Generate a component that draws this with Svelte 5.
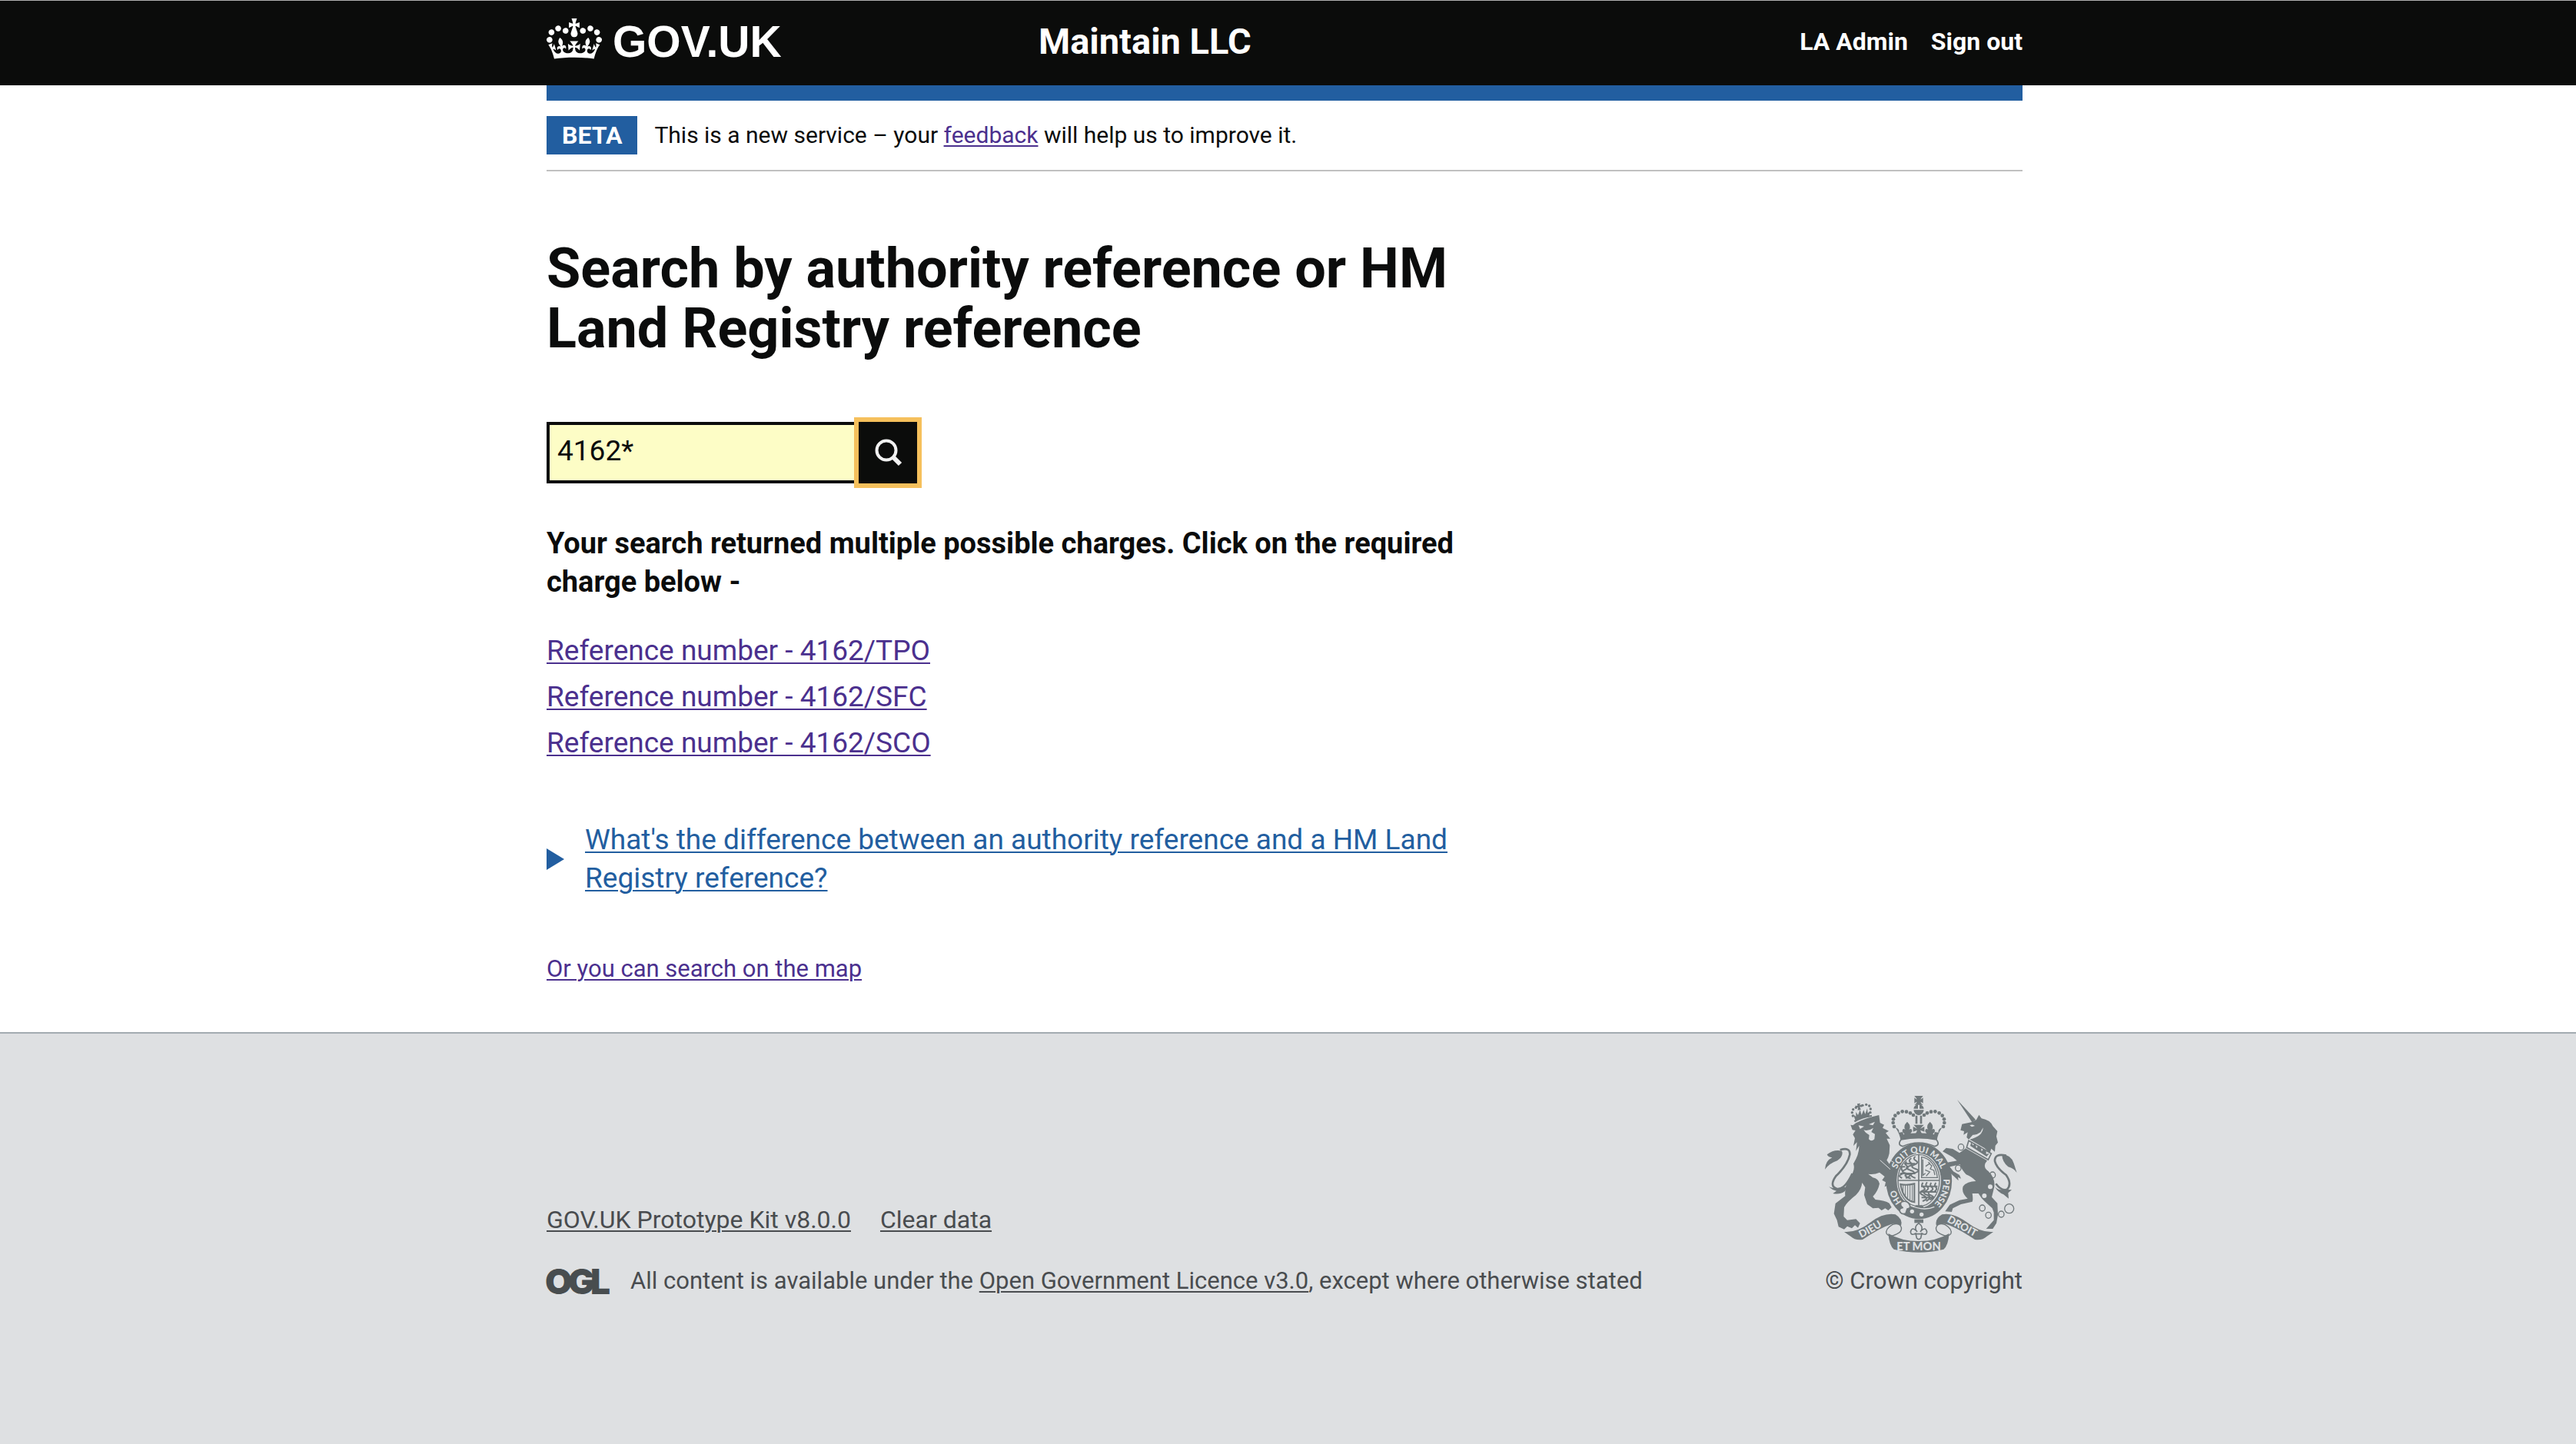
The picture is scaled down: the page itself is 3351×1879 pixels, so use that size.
<script>
  let query = $state('4162*');
  const results = ['4162/TPO', '4162/SFC', '4162/SCO'];
  // Pearls on the left arch of the royal crown; the right arch mirrors them.
  const pearls = [[345, 195], [341, 180], [342, 166], [349, 152], [361, 142], [377, 136], [393, 137], [408, 142], [420, 150]];
  const lionPearls = [[184, 153], [181, 140], [185, 128], [196, 121], [222, 112], [236, 109], [248, 114], [253, 126], [252, 140]];
  const rings = [[606, 275], [595, 357], [729, 384], [689, 513], [713, 541], [763, 537]];
  const submit = (e) => e.preventDefault();
</script>

<header class="masthead">
  <div class="wrap masthead-row">
    <a class="logo" href="#home">
      <svg class="crown" viewBox="0 0 132 97" aria-hidden="true"><path d="M25 30.2c3.5 1.5 7.7-.2 9.1-3.7 1.5-3.6-.2-7.8-3.9-9.2-3.6-1.4-7.6.3-9.1 3.9-1.4 3.5.3 7.5 3.9 9zM9 39.5c3.6 1.5 7.8-.2 9.2-3.7 1.5-3.6-.2-7.8-3.9-9.1-3.6-1.5-7.6.2-9.1 3.8-1.4 3.5.3 7.5 3.8 9zM4.4 57.2c3.5 1.5 7.7-.2 9.1-3.8 1.5-3.6-.2-7.7-3.9-9.1-3.5-1.5-7.6.3-9.1 3.8-1.4 3.5.3 7.6 3.9 9.1zm38.3-21.4c3.5 1.5 7.7-.2 9.1-3.8 1.5-3.6-.2-7.7-3.9-9.1-3.6-1.5-7.6.3-9.1 3.8-1.3 3.6.4 7.7 3.9 9.1zm64.4-5.6c-3.6 1.5-7.8-.2-9.1-3.7-1.5-3.6.2-7.8 3.8-9.2 3.6-1.4 7.7.3 9.2 3.9 1.3 3.5-.4 7.5-3.9 9zm15.9 9.3c-3.6 1.5-7.7-.2-9.1-3.7-1.5-3.6.2-7.8 3.7-9.1 3.6-1.5 7.7.2 9.2 3.8 1.5 3.5-.3 7.5-3.8 9zm4.7 17.7c-3.6 1.5-7.8-.2-9.2-3.8-1.5-3.6.2-7.7 3.9-9.1 3.6-1.5 7.7.3 9.2 3.8 1.3 3.5-.4 7.6-3.9 9.1zM89.3 35.8c-3.6 1.5-7.8-.2-9.2-3.8-1.4-3.6.2-7.7 3.9-9.1 3.6-1.5 7.7.3 9.2 3.8 1.4 3.6-.3 7.7-3.9 9.1zM69.7 17.7l8.9 4.7V9.3l-8.9 2.8c-.2-.3-.5-.6-.9-.9L72.4 0H59.6l3.5 11.2c-.3.3-.6.5-.9.9l-8.8-2.8v13.1l8.8-4.7c.3.3.6.7.9.9l-5 15.4v.1c-.2.8-.4 1.6-.4 2.4 0 4.1 3.1 7.5 7 8.1h.2c.3 0 .7.1 1 .1.4 0 .7 0 1-.1h.2c4-.6 7.1-4.1 7.1-8.1 0-.8-.1-1.7-.4-2.4V34l-5.1-15.4c.4-.2.7-.6 1-.9zM66 92.8c16.9 0 32.8 1.1 47.1 3.2 4-16.9 8.9-26.7 14-33.5l-9.6-3.4c1 4.9 1.1 7.2 0 10.2-1.5-1.4-3-4.3-4.2-8.7L108.6 76c2.8-2 5-3.2 7.5-3.3-4.4 9.4-10 11.9-13.6 11.2-4.3-.8-6.3-4.6-5.6-7.9 1-4.7 5.7-5.9 8-.5 4.3-8.7-3-11.4-7.6-8.8 7.1-7.2 7.9-13.5 2.1-21.1-8 6.1-8.1 12.3-4.5 20.8-4.7-5.4-12.1-2.5-9.5 6.2 3.4-5.2 7.9-2 7.2 3.1-.6 4.3-6.4 7.8-13.5 7.2-10.3-.9-10.9-8-11.2-13.8 2.5-.5 7.1 1.8 11 7.3L80.2 60c-4.1 4.4-8 5.3-12.3 5.4 1.4-4.4 8-11.6 8-11.6H55.5s6.4 7.2 7.9 11.6c-4.2-.1-8-1-12.3-5.4l1.4 16.4c3.9-5.5 8.5-7.7 10.9-7.3-.3 5.8-.9 12.8-11.1 13.8-7.2.6-12.9-2.9-13.5-7.2-.7-5 3.8-8.3 7.1-3.1 2.7-8.7-4.6-11.6-9.4-6.2 3.7-8.5 3.6-14.7-4.6-20.8-5.8 7.6-5 13.9 2.2 21.1-4.7-2.6-11.9.1-7.7 8.8 2.3-5.5 7.1-4.2 8.1.5.7 3.3-1.3 7.1-5.7 7.9-3.5.7-9-1.8-13.5-11.2 2.5.1 4.7 1.3 7.5 3.3l-4.7-15.4c-1.2 4.4-2.7 7.2-4.3 8.7-1.1-3-.9-5.3 0-10.2l-9.5 3.4c5 6.9 9.9 16.7 14 33.5 14.8-2.1 30.8-3.2 47.7-3.2z" /></svg>
      <span>GOV.UK</span>
    </a>
    <a class="service" href="#service">Maintain LLC</a>
    <nav class="account" aria-label="Account">
      <a href="#admin">LA Admin</a>
      <a href="#signout">Sign out</a>
    </nav>
  </div>
</header>

<div class="page">
  <div class="wrap">
    <div class="phase">
      <strong class="tag">BETA</strong>
      <span>This is a new service – your <a class="visited" href="#feedback">feedback</a> will help us to improve it.</span>
    </div>
    <main>
      <h1>Search by authority reference or HM Land Registry reference</h1>
      <form class="search" role="search" onsubmit={submit}>
        <input type="text" aria-label="Reference" bind:value={query} />
        <button type="submit" aria-label="Search">
          <svg viewBox="0 0 76 80" aria-hidden="true">
            <circle cx="36" cy="37" r="12.5" fill="none" stroke="#f1f1f1" stroke-width="4" />
            <path d="M45 46l9 9" stroke="#f1f1f1" stroke-width="6" />
          </svg>
        </button>
      </form>
      <p class="notice">Your search returned multiple possible charges. Click on the required charge below -</p>
      <ul>
        {#each results as ref}
          <li><a class="visited" href="#{ref}">Reference number - {ref}</a></li>
        {/each}
      </ul>
      <details>
        <summary><span>What's the difference between an authority reference and a HM Land Registry reference?</span></summary>
      </details>
      <p class="map"><a class="visited" href="#map">Or you can search on the map</a></p>
    </main>
  </div>
</div>

<footer>
  <div class="wrap foot-row">
    <div class="meta">
      <div class="foot-links">
        <a href="#kit">GOV.UK Prototype Kit v8.0.0</a>
        <a href="#clear">Clear data</a>
      </div>
      <div class="licence">
        <svg class="ogl" viewBox="0 0 82 34" aria-label="Open Government Licence"><text x="-2 28 57" y="34">OGL</text></svg>
        <span>All content is available under the <a href="#ogl">Open Government Licence v3.0</a>, except where otherwise stated</span>
      </div>
    </div>
    <a class="copyright" href="#copyright">
      <svg class="crest" viewBox="75 75 750 612" aria-hidden="true">
        <defs>
          <path id="garter-left" d="M375 489A95 115 0 0 1 347 407" />
          <path id="garter-top" d="M352 374A95 115 0 0 1 532 374" />
          <path id="garter-right" d="M537 400A95 115 0 0 1 482 511" />
          <path id="scroll-left" d="M216 630Q262 608 322 568" />
          <path id="scroll-right" d="M550 566Q600 594 672 632" />
        </defs>

        <!-- royal crown -->
        <g>
          {#each pearls as [x, y]}
            <circle cx={x} cy={y} r="7" /><circle cx={882 - x} cy={y} r="7" />
          {/each}
          <path d="M424 75h34q-8 9-10 14 5-2 10-7v22q-5-5-10-6 2 8 10 12h-34q8-4 10-12-5 1-10 6V82q5 5 10 7-2-5-10-14z" />
          <path d="M421 125q2-14 17-17v17zM444 108q15 3 17 17h-17zM421 130h40q-3 18-20 21-17-3-20-21z" />
          <path d="M428 152h8v32h-8zM446 152h8v32h-8zM421 188h40l-14 15 16-8v20l-16-6 6 14h-24l6-14-16 6v-20l16 8z" />
          <path d="M396 176q18 18 7 30 12-6 12 8l-9 12h-20l-9-12q0-14 12-8-11-12 7-30zM485 176q18 18 7 30 12-6 12 8l-9 12h-20l-9-12q0-14 12-8-11-12 7-30z" />
          <path d="M350 198q17 6 14 20l15-2 2 10q60-12 120 0l2-10 15 2q-3-14 14-20-18 28-20 50-71-20-142 0-2-22-20-50z" />
        </g>

        <!-- garter and shield -->
        <ellipse cx="442" cy="407" rx="107" ry="127" fill="none" stroke="#70787b" stroke-width="43" />
        <path class="line pale" stroke-width="5" d="M372 246Q356 266 378 272Q441 244 504 272Q526 266 510 246Q441 232 372 246z" />
        <ellipse cx="441" cy="405" rx="86" ry="106" class="pale" />
        <ellipse cx="441" cy="405" rx="81" ry="101" class="line" fill="none" stroke-width="4" />
        <path class="line" fill="none" stroke-width="5" d="M441 303v204M360 405h162" />
        <path class="line" fill="none" stroke-width="6" d="M428 312q-12 8 2 16t-6 16 4 16-4 16 4 20M412 318q-14 10-2 18t-8 14 8 16-6 14 6 18M394 332q-12 8 0 16t-8 16 8 14-4 18M376 350q-6 10 2 18t-6 14 4 14M458 414q-10 10 2 18t-6 14 6 18-4 22M474 412q-10 10 0 18t-6 16 6 16-4 24M490 414q-8 10 2 18t-6 16 4 16-6 16M508 414q-8 10 0 18t-8 18M366 352h22M384 340h44M368 378h60M450 428h64M450 450h60M452 472h44" />
        <path class="line" fill="none" stroke-width="4" d="M452 314q52 8 62 80h-62zM457 323v62l10-8M468 350l14-10 10 8-6 12 14 6 4 18M470 388l14-16-18-8M478 334l8 6" />
        <path class="line" fill="none" stroke-width="6" d="M370 420q24 6 54-2v72q-44-8-54-70z" />
        <path class="line" fill="none" stroke-width="3" d="M380 424v26M389 424v40M398 423v50M407 422v58M416 421v64" />
        <path d="M430 502h24l10 12h-44z" />
        <path class="gap" fill="none" stroke-width="4" d="M398 498q60 30 104 10M566 372q-4-20-14-36" />
        <circle cx="415" cy="526" r="8" class="pale" /><circle cx="452" cy="538" r="8" class="pale" />
        <path class="line pale" stroke-width="5" d="M372 490q26-10 34 12 4 14-10 14l-6 18q-20 6-24-12 2-12 14-10-14-8-8-22z" />
        <g class="motto band">
          <text><textPath href="#garter-left">HO</textPath></text>
          <text text-anchor="middle"><textPath href="#garter-top" startOffset="50%">SOIT QUI MAL</textPath></text>
          <text><textPath href="#garter-right">PENSE</textPath></text>
        </g>

        <!-- lion -->
        <g>
          {#each lionPearls as [x, y]}<circle cx={x} cy={y} r="5" />{/each}
          <path d="M201 106l12-2-3 8 8-3 2 10-9-2 4 12-12 2 1-12-8 4-3-10 9 1zM186 148l10 8 0-18 8 12 8-20 6 20 8-20 6 16 8-22 2 18 10-6-6 22q-26 0-52 14z" />
          <path d="M188 172Q220 152 258 150L258 156Q222 160 192 178z" />
          <path d="M175 188L184 190L196 181Q236 160 286 150L290 180L306 188L300 200L324 212L312 220L330 242L316 242L328 268L326 300Q322 318 316 326L340 360L352 398L350 434L338 424L330 438L322 424L308 430L312 412L298 404L308 390L288 374Q266 384 244 380L262 394Q284 398 288 418Q282 448 262 468L272 480Q310 484 326 494L335 510L322 522L310 514L296 522L284 512L262 514L240 498L228 462L232 432L220 414Q218 440 196 462Q160 490 150 510L148 546L162 560L196 556L212 572L204 590L192 580L180 592L162 584L150 596L128 586L122 560L110 535L116 495L154 466Q150 420 176 390Q194 360 186 340Q210 300 208 270L196 290L200 256L186 270L192 240L184 226L194 210L182 208z" />
          <path class="pale" d="M206 190L228 194L212 204zM246 186L270 176L262 190zM226 208Q244 214 264 200L256 216L270 224L268 244Q256 256 246 244L248 228L234 218z" />
          <path d="M75 362q2-34 28-46-16-2-20-12 28-22 58-14 8 20-18 38-30 10-48 34zM90 430q28 12 52 0l20 2-10 16q-20 14-46 8l14-10q-18-4-30-16z" />
          <path class="line" fill="none" stroke-width="8" d="M134 286q40-12 38 18-8 40-54 84-28 40 4 50 30 4 60-60" />
          <path class="gap" fill="none" stroke-width="3" d="M290 326L330 362M346 336L322 322" />
        </g>

        <!-- unicorn -->
        <g>
          <path d="M591 90l72 78-14 10z" />
          <path d="M646 178l20-10 10-19 10 14q34 6 44 30l18 20-4 20 6 24-10 12-2 24-14-12-6 18-20-20-58-34q52-12 52-46l-10 18q-16 12-30 10l-16 18-8-8 4-20-16 10 2-14-14-4 6-24z" />
          <path class="pale" d="M640 190q12-6 20 2l-12 4z" />
          <path class="line pale" stroke-width="5" d="M636 250l88 50-12 24-84-48z" />
          <path d="M642 270L646 256L652 268L662 262L666 280L674 268L684 276L686 292L694 282L704 290L704 302L716 300L706 312z" />
          <path d="M624 280L708 328Q690 348 706 364Q740 390 736 430L726 470L748 494L750 540L744 572L730 594L704 594L718 578L734 560L734 530L728 514L700 488Q684 474 674 456L650 456Q654 482 650 488L606 498L574 514L570 528L544 526L562 500L600 482L632 476Q606 452 614 428Q630 408 664 408Q650 392 626 382Q606 360 602 342L562 352L576 370L600 384L606 398L594 392L596 406L560 372L548 336L590 328L574 314L534 292L548 278L574 282L600 298z" />
          <path d="M766 304q34 0 46 34l12 38q-10-18-34-24-24-20-24-48zM738 430q16 16 34 10l32 2-14 12 2 22-20-16q-22-8-34-30z" />
          <path class="line" fill="none" stroke-width="8" d="M782 308q-46-10-44 22 6 26 44 54 24 34 4 56-22 8-44-22" />
          {#each rings as [x, y]}<ellipse cx={x} cy={y} rx="11" ry="12" class="line" fill="none" stroke-width="4" />{/each}
          <circle cx="794" cy="515" r="18" class="line" fill="none" stroke-width="4" />
          <circle cx="720" cy="430" r="9" class="pale" /><circle cx="697" cy="465" r="9" class="pale" />
        </g>

        <!-- motto scroll -->
        <path d="M150 606q50 4 104-38 50-38 96-30 30 18 22 44-20-10-38-6-44 14-112 60-30 4-46-12z" />
        <path d="M732 606q-50 4-104-38-50-38-96-30-30 18-22 44 20-10 38-6 44 14 112 60 30 4 46-12z" />
        <path class="line pale" stroke-width="4" d="M338 578q-30 18-22 36 14 18 50-6 14-14 2-28-10-10-30-2zM544 578q30 18 22 36-14 18-50-6-14-14-2-28 10-10 30-2z" />
        <path d="M322 612q50 30 119 30t119-30q-4 48-22 62-97 24-194 0-18-14-22-62z" />
        <path d="M424 557h35v14h-35z" />
        <path class="line" fill="none" stroke-width="5" d="M441 572q-22 16-6 34-20-24-26 0 2 16 20 6l4 18q8 10 16 0l4-18q18 10 20-6-6-24-26 0 16-18-6-34zM422 614h38" />
        <g class="motto">
          <text><textPath href="#scroll-left">DIEU</textPath></text>
          <text class="large" x="441" y="677" text-anchor="middle">ET MON</text>
          <text><textPath href="#scroll-right">DROIT</textPath></text>
        </g>
      </svg>
      <span>© Crown copyright</span>
    </a>
  </div>
</footer>

<style>
  :global(body) {
    margin: 0;
    background: #fff;
  }
  :global(#app) {
    min-height: 100vh;
    display: flex;
    flex-direction: column;
    font-family: Roboto, 'Liberation Sans', sans-serif;
    font-size: 31px;
    line-height: 40px;
    color: #0b0c0c;
  }
  .masthead,
  .page,
  footer {
    padding-right: 9px;
  }
  .wrap {
    max-width: 1920px;
    margin: 0 auto;
  }
  a {
    color: inherit;
    text-decoration-thickness: 2px;
    text-underline-offset: 3px;
  }
  .visited {
    color: #4b308e;
  }

  .masthead {
    background: #0b0c0b;
    border-top: 1px solid #b0b0b0;
    color: #fff;
    font-weight: 700;
  }
  .masthead-row {
    display: grid;
    grid-template-columns: 1fr 1fr 1fr;
    align-items: center;
    height: 106px;
    padding-bottom: 4px;
  }
  .masthead a {
    text-decoration: none;
  }
  .logo {
    display: flex;
    align-items: center;
    gap: 14px;
    font: 700 57px/60px 'Liberation Sans', sans-serif;
  }
  .crown {
    width: 72px;
    height: 53px;
    margin-bottom: 8px;
    fill: #fff;
  }
  .service {
    font-size: 47px;
    line-height: 50px;
  }
  .account {
    display: flex;
    justify-content: flex-end;
    gap: 30px;
    font-size: 32px;
  }

  .phase {
    display: flex;
    align-items: center;
    gap: 22px;
    padding: 20px 0;
    border-top: 20px solid #225ea0;
    border-bottom: 2px solid #c0c0c0;
    font-size: 30px;
  }
  .tag {
    padding: 5px 20px;
    background: #225ea0;
    color: #fff;
    font-size: 32px;
  }
  main {
    width: calc(66.66% - 30px);
    padding-bottom: 62px;
  }
  h1 {
    margin: 88px 0 82px;
    font-size: 72px;
    line-height: 78px;
  }
  .search {
    display: flex;
  }
  input {
    box-sizing: border-box;
    width: 406px;
    height: 80px;
    padding: 0 10px 6px;
    border: 4px solid #0b0c0c;
    border-radius: 0;
    background: #fdfdc6;
    color: inherit;
    font: inherit;
    font-size: 37px;
  }
  button {
    width: 76px;
    height: 80px;
    padding: 0;
    border: 0;
    background: #0b0c0b;
    outline: 6px solid #f6c05c;
  }
  button svg {
    display: block;
  }
  .notice {
    margin: 53px 0 40px;
    font-size: 38px;
    line-height: 50px;
    font-weight: 700;
  }
  ul {
    display: flex;
    flex-direction: column;
    gap: 10px;
    margin: 0 0 76px;
    padding: 0;
    list-style: none;
    font-size: 37px;
    line-height: 50px;
  }
  summary {
    display: flex;
    align-items: center;
    font-size: 37px;
    line-height: 50px;
    color: #225ea0;
  }
  summary::before {
    content: '';
    flex: none;
    margin-right: 27px;
    border-style: solid;
    border-width: 14px 0 14px 23px;
    border-color: transparent transparent transparent #225ea0;
  }
  summary span {
    text-decoration: underline;
    text-decoration-thickness: 2px;
    text-underline-offset: 3px;
  }
  .map {
    margin: 73px 0 0;
  }

  footer {
    flex: 1;
    border-top: 2px solid #a3abb1;
    background: #dee0e2;
    color: #494c4f;
  }
  .foot-row {
    display: flex;
    justify-content: space-between;
    align-items: flex-end;
    padding: 81px 0;
  }
  .foot-links {
    display: flex;
    gap: 38px;
    margin-bottom: 40px;
    font-size: 32px;
  }
  .licence {
    display: flex;
    align-items: center;
    gap: 27px;
  }
  .ogl {
    width: 82px;
    height: 34px;
    overflow: visible;
    fill: #484d4f;
    font: 900 46px Inter, sans-serif;
  }
  .copyright {
    display: flex;
    flex-direction: column;
    gap: 17px;
    text-decoration: none;
  }
  .crest {
    width: 250px;
    height: 204px;
    fill: #70787b;
  }
  .line {
    stroke: #70787b;
  }
  .gap {
    stroke: #dee0e2;
  }
  .pale {
    fill: #dee0e2;
  }
  .motto {
    fill: #dee0e2;
    font: 900 40px Lato, sans-serif;
  }
  .band {
    font-size: 34px;
  }
  .large {
    font-size: 44px;
  }
</style>
